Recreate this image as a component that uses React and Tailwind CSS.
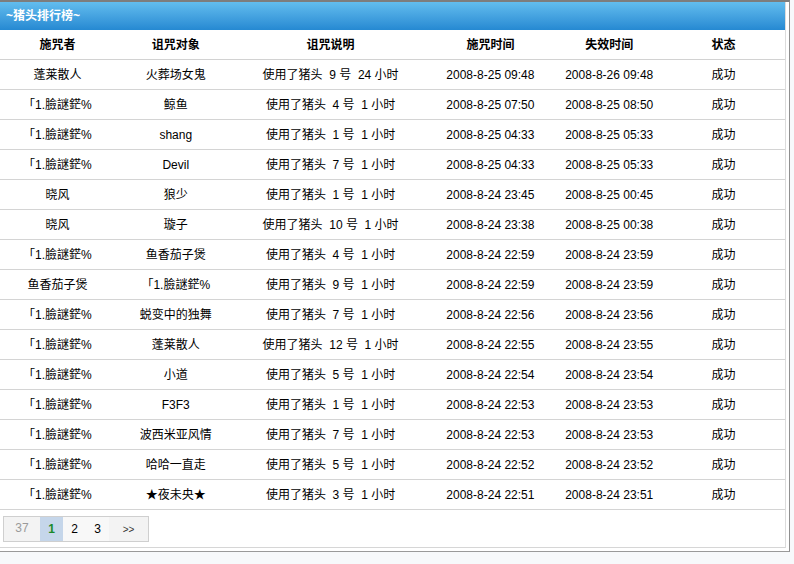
const rows = [
  ["蓬莱散人", "火葬场女鬼", "9", "24", "2008-8-25 09:48", "2008-8-26 09:48"],
  ["「1.臉謎鋩%", "鲸鱼", "4", "1", "2008-8-25 07:50", "2008-8-25 08:50"],
  ["「1.臉謎鋩%", "shang", "1", "1", "2008-8-25 04:33", "2008-8-25 05:33"],
  ["「1.臉謎鋩%", "Devil", "7", "1", "2008-8-25 04:33", "2008-8-25 05:33"],
  ["晓风", "狼少", "1", "1", "2008-8-24 23:45", "2008-8-25 00:45"],
  ["晓风", "璇子", "10", "1", "2008-8-24 23:38", "2008-8-25 00:38"],
  ["「1.臉謎鋩%", "鱼香茄子煲", "4", "1", "2008-8-24 22:59", "2008-8-24 23:59"],
  ["鱼香茄子煲", "「1.臉謎鋩%", "9", "1", "2008-8-24 22:59", "2008-8-24 23:59"],
  ["「1.臉謎鋩%", "蜕变中的独舞", "7", "1", "2008-8-24 22:56", "2008-8-24 23:56"],
  ["「1.臉謎鋩%", "蓬莱散人", "12", "1", "2008-8-24 22:55", "2008-8-24 23:55"],
  ["「1.臉謎鋩%", "小道", "5", "1", "2008-8-24 22:54", "2008-8-24 23:54"],
  ["「1.臉謎鋩%", "F3F3", "1", "1", "2008-8-24 22:53", "2008-8-24 23:53"],
  ["「1.臉謎鋩%", "波西米亚风情", "7", "1", "2008-8-24 22:53", "2008-8-24 23:53"],
  ["「1.臉謎鋩%", "哈哈一直走", "5", "1", "2008-8-24 22:52", "2008-8-24 23:52"],
  ["「1.臉謎鋩%", "★夜未央★", "3", "1", "2008-8-24 22:51", "2008-8-24 23:51"],
]

const cols = ["w-[115px]", "w-[122px]", "w-[188px]", "w-[132px]", "w-[106px]", "w-[123px]"]
const heads = ["施咒者", "诅咒对象", "诅咒说明", "施咒时间", "失效时间", "状态"]

export default function App() {
  return (
    <div className="w-[794px] h-[564px] bg-[#f7f9fb] text-[12px] text-black font-['Liberation_Sans','Noto_Sans_CJK_SC',sans-serif]">

      <div className="w-[790px] bg-white border-t-2 border-t-[#7d7d7d] border-r border-r-[#8f8f8f] border-b border-b-[#9a9a9a]">

        <div className="mr-[3px] mb-[3px] border-r border-r-[#dcdcdc] border-b border-b-[#d6d6d6] pb-[5px]">

          <div className="h-[28px] flex items-center pl-[6px] bg-gradient-to-b from-[#62bdee] to-[#2589d2] text-white font-bold text-[12px]">
            ~猪头排行榜~
          </div>

          <div className="flex h-[30px] items-center font-bold border-b border-[#d2d2d2]">
            {heads.map((h, i) => (
              <div key={h} className={`${cols[i]} text-center`}>
                {h}
              </div>
            ))}
          </div>

          {rows.map((r, idx) => (
            <div key={idx} className="flex h-[30px] items-center border-b border-[#d4d4d4]">
              <div className={`${cols[0]} text-center whitespace-nowrap`}>{r[0]}</div>
              <div className={`${cols[1]} text-center whitespace-nowrap`}>{r[1]}</div>
              <div className={`${cols[2]} text-center whitespace-pre`}>
                {`使用了猪头  ${r[2]} 号  ${r[3]} 小时`}
              </div>
              <div className={`${cols[3]} text-center`}>{r[4]}</div>
              <div className={`${cols[4]} text-center`}>{r[5]}</div>
              <div className={`${cols[5]} text-center`}>成功</div>
            </div>
          ))}

          <div className="flex mt-[6px] ml-[3px] w-[146px] h-[26px] border border-[#cfcfcf] bg-[#f3f3f3]">
            <div className="w-[36px] text-center text-[#9a9a9a] pt-[2px]">37</div>
            <div className="w-[23px] flex items-center justify-center bg-[#c5d6ea] text-[#1a8a2a] font-bold">1</div>
            <div className="w-[23px] flex items-center justify-center bg-[#f8f8f8]">2</div>
            <div className="w-[23px] flex items-center justify-center bg-[#f8f8f8]">3</div>
            <div className="flex-1 flex items-center justify-center text-[10px] text-[#333]">&gt;&gt;</div>
          </div>

        </div>

      </div>

    </div>
  )
}
